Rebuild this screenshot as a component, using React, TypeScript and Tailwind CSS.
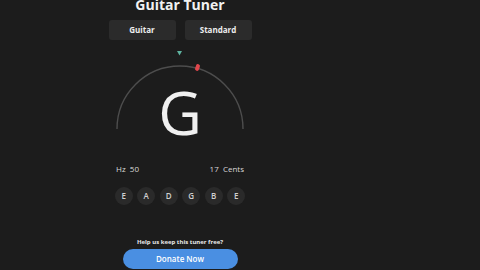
import { useState } from 'react'

const NOTES = ['E', 'A', 'D', 'G', 'B', 'E']

export default function App() {
  const [tuning] = useState('Standard')

  return (
    <div
      className="h-[270px] w-[480px] overflow-hidden bg-[#1c1c1c] text-white"
      style={{ fontFamily: '"Open Sans", "Noto Sans", sans-serif' }}
    >
      <div className="flex w-[360px] flex-col items-center">
        <h1 className="-mt-[4px] text-[14px] font-bold leading-[18px] text-[#f2f2f2]">Guitar Tuner</h1>

        <div className="mt-[6px] flex gap-[9px]">
          <button type="button" className="h-[20px] w-[67px] rounded-[3px] bg-[#2b2b2b] text-[8px] font-bold text-[#eeeeee]">
            Guitar
          </button>
          <button type="button" className="h-[20px] w-[67px] rounded-[3px] bg-[#2b2b2b] text-[8px] font-bold text-[#eeeeee]">
            {tuning}
          </button>
        </div>

        <div className="relative mt-[11px] flex h-[100px] w-[140px] justify-center">
          <svg className="absolute left-0 top-0" width="140" height="100" viewBox="0 0 140 100">
            <path d="M 67 0 L 72 0 L 69.5 4.5 Z" fill="#5fb3a0" />
            <path d="M 7 78 A 63 63 0 0 1 133 78" fill="none" stroke="#4d4d4d" strokeWidth="1.4" />
            <rect x="85.5" y="13" width="4" height="7" rx="2" fill="#e0474c" transform="rotate(18 87.5 16.5)" />
          </svg>
          <span className="mt-[31px] text-[60px] font-normal leading-[60px] text-[#f0f0f0]">G</span>
        </div>

        <div className="mt-[13px] flex w-[128px] justify-between text-[8px] leading-[10px] text-[#d8d8d8]">
          <span>Hz&nbsp;&nbsp;50</span>
          <span>17&nbsp;&nbsp;Cents</span>
        </div>

        <div className="mt-[13px] flex gap-[4.5px]">
          {NOTES.map((note, i) => (
            <div
              key={i}
              className="flex h-[18px] w-[18px] items-center justify-center rounded-full bg-[#2a2a2a] text-[8px] font-semibold text-[#d0d0d0]"
            >
              {note}
            </div>
          ))}
        </div>

        <p className="mt-[33px] text-[6px] font-bold leading-[8px] text-[#e8e8e8]">Help us keep this tuner free?</p>

        <button
          type="button"
          className="mt-[3px] h-[20px] w-[115px] shrink-0 rounded-full bg-[#4a8fe2] text-[8px] font-semibold text-white"
        >
          Donate Now
        </button>
      </div>
    </div>
  )
}
